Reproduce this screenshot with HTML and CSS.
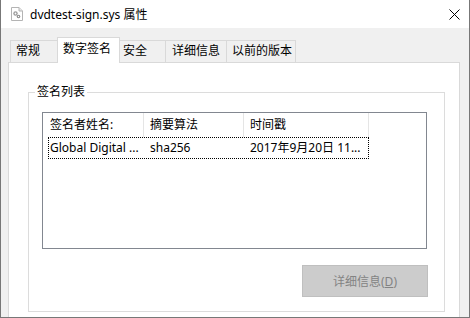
FILE: index.html
```html
<!DOCTYPE html>
<html lang="zh-CN">
<head>
  <meta charset="UTF-8">
  <title>dvdtest-sign.sys 属性</title>
  <link rel="stylesheet" href="styles.css">
</head>
<body>
  <div class="window">
    <div class="titlebar">
      <svg class="file-icon" width="12" height="14" viewBox="0 0 12 14">
        <path d="M0.5 0.5 H8 L11.5 4 V13.5 H0.5 Z" fill="#fff" stroke="#b4b4b4"/>
        <path d="M8 0.5 V4 H11.5" fill="#e6e6e6" stroke="#b4b4b4"/>
        <circle cx="4.5" cy="6.5" r="2.2" fill="#9a9a9a"/>
        <circle cx="4.5" cy="6.5" r="0.9" fill="#fff"/>
        <circle cx="7.5" cy="9.5" r="1.8" fill="#8a8a8a"/>
        <circle cx="7.5" cy="9.5" r="0.7" fill="#fff"/>
      </svg>
      <span class="title">dvdtest-sign.sys 属性</span>
      <svg class="close" width="11" height="11" viewBox="0 0 11 11">
        <path d="M0.5 0.5 L10.5 10.5 M10.5 0.5 L0.5 10.5" stroke="#000" stroke-width="1"/>
      </svg>
    </div>

    <div class="content">
      <div class="tabs">
        <div class="tab tab-general">常规</div>
        <div class="tab tab-sign active">数字签名</div>
        <div class="tab tab-security">安全</div>
        <div class="tab tab-details">详细信息</div>
        <div class="tab tab-prev">以前的版本</div>
      </div>

      <div class="panel">
        <fieldset class="group">
          <legend>签名列表</legend>

          <div class="listview">
            <div class="lv-header">
              <div class="lv-head col-name">签名者姓名:</div>
              <div class="lv-head col-algo">摘要算法</div>
              <div class="lv-head col-time">时间戳</div>
            </div>
            <div class="lv-row">
              <div class="lv-cell cell-name">Global Digital ...</div>
              <div class="lv-cell cell-algo">sha256</div>
              <div class="lv-cell cell-time">2017年9月20日 11...</div>
            </div>
          </div>

          <div class="actions">
            <button class="btn" disabled>详细信息(<u>D</u>)</button>
          </div>
        </fieldset>
      </div>
    </div>
  </div>
</body>
</html>
```

FILE: styles.css
```css
* {
  box-sizing: border-box;
}

body {
  margin: 0;
  font-family: "Noto Sans", "Noto Sans CJK SC", sans-serif;
  font-size: 12px;
  color: #000;
}

.window {
  width: 470px;
  height: 318px;
  border: 1px solid #777;
  border-top: none;
  background: #f0f0f0;
  display: flex;
  flex-direction: column;
  overflow: hidden;
}

/* 标题栏 */
.titlebar {
  height: 28px;
  flex: none;
  background: #fff;
  display: flex;
  align-items: center;
  padding: 0 9px 0 10px;
}

.file-icon {
  display: block;
}

.title {
  margin-left: 7px;
  flex: 1;
  white-space: nowrap;
}

.close {
  display: block;
}

.content {
  flex: 1;
  display: flex;
  flex-direction: column;
}

/* 选项卡 */
.tabs {
  display: flex;
  align-items: flex-end;
  height: 25px;
  margin: 9px 0 0 9px;
}

.tab {
  height: 22px;
  padding: 0 0 0 5px;
  border: 1px solid #d9d9d9;
  border-right: none;
  border-bottom: none;
  background: #f0f0f0;
  line-height: 20px;
  white-space: nowrap;
}

.tab-general { width: 49px; }
.tab-sign { width: 59px; }
.tab-security { width: 47px; padding-left: 4px; }
.tab-details { width: 61px; padding-left: 6px; }
.tab-prev { width: 70px; border-right: 1px solid #d9d9d9; }

.tab.active {
  position: relative;
  z-index: 1;
  width: 63px;
  height: 26px;
  margin: 0 -2px -1px;
  padding-top: 1px;
  background: #fff;
  border-right: 1px solid #d9d9d9;
}

/* 内容面板 */
.panel {
  flex: 1;
  width: 452px;
  margin-left: 7px;
  background: #fff;
  border: 1px solid #d9d9d9;
  border-bottom: none;
}

.group {
  width: 417px;
  margin: 21px 0 0 19px;
  padding: 0 0 14px;
  border: 1px solid #dcdcdc;
}

.group legend {
  margin-left: 6px;
  padding: 0 2px;
  line-height: 16px;
}

.listview {
  width: 385px;
  height: 137px;
  margin: 12px 0 0 13px;
  border: 1px solid #828790;
  background: #fff;
}

.lv-header {
  display: flex;
  height: 24px;
}

.lv-head {
  line-height: 24px;
  border-right: 1px solid #e5e5e5;
  padding-left: 6px;
  white-space: nowrap;
}

.col-name { width: 101px; padding-left: 7px; }
.col-algo { width: 100px; }
.col-time { width: 125px; }

.lv-row {
  display: flex;
  width: 321px;
  height: 22px;
  margin-left: 5px;
  border: 1px dotted #000;
}

.lv-cell {
  line-height: 20px;
  padding-left: 1px;
  white-space: nowrap;
  overflow: hidden;
}

.cell-name { width: 100px; }
.cell-algo { width: 100px; }
.cell-time { flex: 1; }

.actions {
  display: flex;
  justify-content: flex-end;
  margin: 16px 16px 0 0;
}

.btn {
  width: 126px;
  height: 32px;
  padding: 0;
  background: #ccc;
  border: 1px solid #bfbfbf;
  color: #838383;
  font-family: inherit;
  font-size: 12px;
}
```
